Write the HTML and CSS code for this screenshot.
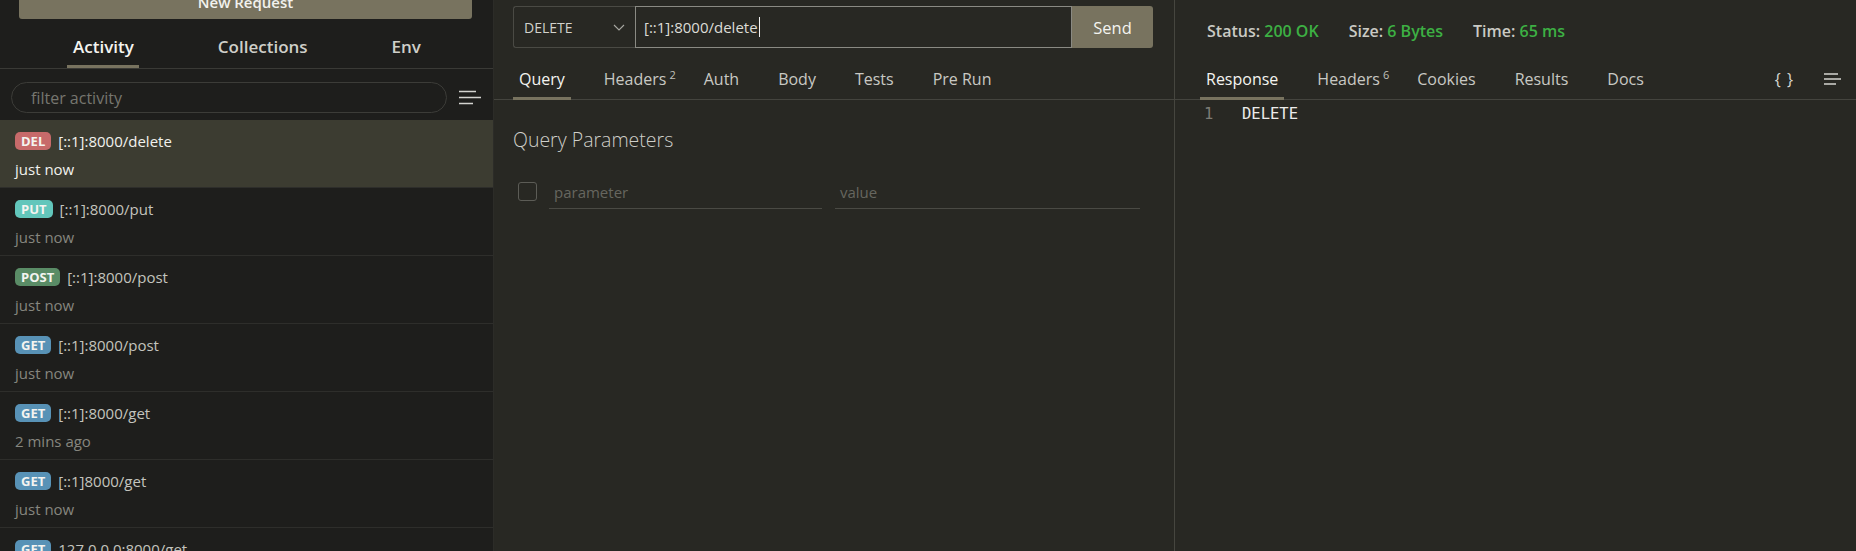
FILE: index.html
```html
<!DOCTYPE html>
<html lang="en">
<head>
<meta charset="utf-8">
<title>Thunder Client</title>
<link rel="stylesheet" href="styles.css">
</head>
<body>
<div class="app">
  <aside class="sidebar">
    <button class="new-req">New Request</button>
    <nav class="side-tabs">
      <span class="side-tab active">Activity</span>
      <span class="side-tab">Collections</span>
      <span class="side-tab">Env</span>
    </nav>
    <div class="filter-row">
      <div class="filter">filter activity</div>
      <svg class="sort-icon" width="24" height="16" viewBox="0 0 24 16">
        <path d="M0 1.5H17M0 7.5H22M0 13.5H14" stroke="#d4d4d0" stroke-width="1.6" fill="none"/>
      </svg>
    </div>
    <ul class="history">
      <li class="item active">
        <div class="line"><span class="badge del">DEL</span><span class="url">[::1]:8000/delete</span></div>
        <div class="time">just now</div>
      </li>
      <li class="item">
        <div class="line"><span class="badge put">PUT</span><span class="url">[::1]:8000/put</span></div>
        <div class="time">just now</div>
      </li>
      <li class="item">
        <div class="line"><span class="badge post">POST</span><span class="url">[::1]:8000/post</span></div>
        <div class="time">just now</div>
      </li>
      <li class="item">
        <div class="line"><span class="badge get">GET</span><span class="url">[::1]:8000/post</span></div>
        <div class="time">just now</div>
      </li>
      <li class="item">
        <div class="line"><span class="badge get">GET</span><span class="url">[::1]:8000/get</span></div>
        <div class="time">2 mins ago</div>
      </li>
      <li class="item">
        <div class="line"><span class="badge get">GET</span><span class="url">[::1]8000/get</span></div>
        <div class="time">just now</div>
      </li>
      <li class="item">
        <div class="line"><span class="badge get">GET</span><span class="url">127.0.0.0:8000/get</span></div>
        <div class="time">just now</div>
      </li>
    </ul>
  </aside>

  <main class="request">
    <div class="url-bar">
      <div class="method">
        <span>DELETE</span>
        <svg class="chev" width="12" height="7" viewBox="0 0 12 7"><path d="M1 1L6 6L11 1" stroke="#a8a8a2" stroke-width="1.1" fill="none"/></svg>
      </div>
      <div class="url-input"><span>[::1]:8000/delete</span><span class="caret"></span></div>
      <button class="send">Send</button>
    </div>
    <nav class="tabs">
      <span class="tab active">Query</span>
      <span class="tab">Headers<sup class="count">2</sup></span>
      <span class="tab">Auth</span>
      <span class="tab">Body</span>
      <span class="tab">Tests</span>
      <span class="tab">Pre Run</span>
    </nav>
    <section class="params">
      <h2 class="params-title">Query Parameters</h2>
      <div class="param-row">
        <span class="checkbox"></span>
        <div class="field key">parameter</div>
        <div class="field val">value</div>
      </div>
    </section>
  </main>

  <section class="response">
    <div class="status">
      <span class="stat">Status: <b>200 OK</b></span>
      <span class="stat">Size: <b>6 Bytes</b></span>
      <span class="stat">Time: <b>65 ms</b></span>
    </div>
    <nav class="tabs resp-tabs">
      <span class="tab active">Response</span>
      <span class="tab">Headers<sup class="count">6</sup></span>
      <span class="tab">Cookies</span>
      <span class="tab">Results</span>
      <span class="tab">Docs</span>
      <span class="tab-tools">
        <span class="braces">{ }</span>
        <svg class="menu-icon" width="20" height="12" viewBox="0 0 20 12">
          <path d="M0 1H14M0 6H17M0 11H12" stroke="#d4d4d0" stroke-width="1.4" fill="none"/>
        </svg>
      </span>
    </nav>
    <div class="code">
      <span class="ln">1</span><span class="code-text">DELETE</span>
    </div>
  </section>
</div>
</body>
</html>
```

FILE: styles.css
```css
* { box-sizing: border-box; }
html, body {
  margin: 0;
  padding: 0;
  width: 1856px;
  height: 551px;
  overflow: hidden;
  background: #282823;
  font-family: "Open Sans", "Noto Sans", sans-serif;
  color: #d8d8d2;
}
.app {
  display: flex;
  height: 551px;
}

/* ---------- sidebar ---------- */
.sidebar {
  width: 494px;
  flex: none;
  background: #1e1e1c;
  border-right: 1px solid #2c2c28;
  overflow: hidden;
  display: flex;
  flex-direction: column;
}
.new-req {
  margin: -15px 21px 0 19px;
  height: 34px;
  flex: none;
  border: none;
  border-radius: 3px;
  background: #78735f;
  color: #f2f2ee;
  font-family: inherit;
  font-size: 15px;
  font-weight: 600;
  padding: 0;
}
.side-tabs {
  display: flex;
  gap: 73px;
  padding-left: 67px;
  margin-top: 13px;
  border-bottom: 1px solid #3a3a36;
  flex: none;
}
.side-tab {
  padding: 0 5px 0 6px;
  height: 36px;
  line-height: 30px;
  font-size: 17px;
  font-weight: 600;
  color: #cfcfc9;
  border-bottom: 3px solid transparent;
}
.side-tab.active {
  color: #f4f4f0;
  border-bottom-color: #78735f;
}
.filter-row {
  display: flex;
  align-items: center;
  margin: 13px 0 7px 11px;
  flex: none;
}
.filter {
  width: 436px;
  height: 31px;
  border: 1px solid #3c3c38;
  border-radius: 16px;
  padding-left: 19px;
  line-height: 31px;
  font-size: 16px;
  color: #76766f;
}
.sort-icon {
  margin-left: 12px;
  margin-top: 1px;
}
.history {
  list-style: none;
  margin: 0;
  padding: 0;
}
.item {
  height: 68px;
  padding: 12px 14px 0 15px;
  border-bottom: 1px solid #2e2e2b;
}
.item.active {
  background: #3c3c31;
}
.line {
  display: flex;
  align-items: center;
  height: 18px;
  gap: 7px;
}
.badge {
  height: 18px;
  line-height: 18px;
  padding: 0 6px;
  border-radius: 5px;
  font-size: 13px;
  font-weight: 700;
  color: #f4f4f0;
}
.badge.del { background: #c76a6a; }
.badge.put { background: #62c6bb; }
.badge.post { background: #5a8c66; }
.badge.get { background: #5892b6; }
.url {
  font-size: 15px;
  color: #c4c4be;
}
.time {
  margin-top: 9px;
  line-height: 20px;
  font-size: 15px;
  color: #86867f;
}
.item.active .url,
.item.active .time { color: #f2f2ee; }

/* ---------- request ---------- */
.request {
  width: 681px;
  flex: none;
  border-right: 1px solid #46463f;
  padding-top: 6px;
}
.url-bar {
  display: flex;
  height: 42px;
  margin: 0 21px 0 19px;
}
.method {
  width: 122px;
  display: flex;
  align-items: center;
  justify-content: space-between;
  padding: 0 10px 0 10px;
  border: 1px solid #4a4a44;
  border-right: none;
  border-radius: 3px 0 0 3px;
  font-size: 14px;
  color: #d2d2cc;
}
.url-input {
  flex: 1;
  display: flex;
  align-items: center;
  padding-left: 8px;
  border: 1px solid #8a8a83;
  font-size: 15px;
  color: #dcdcd6;
}
.caret {
  width: 1px;
  height: 20px;
  background: #f0f0f0;
  margin-left: 1px;
}
.send {
  width: 81px;
  border: none;
  border-radius: 0 3px 3px 0;
  background: #78735f;
  color: #f4f4f0;
  font-family: inherit;
  font-size: 16.5px;
  padding: 0;
}
.tabs {
  display: flex;
  gap: 27px;
  margin-top: 11px;
  padding-left: 19px;
  border-bottom: 1px solid #44443e;
  height: 41px;
}
.tab {
  padding: 0 6px;
  height: 41px;
  line-height: 40px;
  font-size: 16px;
  color: #c9c9c3;
  border-bottom: 3px solid transparent;
  margin-bottom: -1px;
}
.tab.active {
  color: #f4f4f0;
  border-bottom-color: #78735f;
}
.count {
  font-size: 11px;
  margin-left: 3px;
  margin-right: -11px;
  vertical-align: 6px;
  line-height: 0;
  color: #c0c0ba;
}
.params {
  padding: 0 0 0 19px;
}
.params-title {
  margin: 27px 0 0;
  font-size: 19.5px;
  line-height: 26px;
  font-weight: 300;
  color: #cfcfc9;
}
.param-row {
  display: flex;
  align-items: flex-start;
  margin-top: 29px;
}
.checkbox {
  width: 19px;
  height: 19px;
  margin-left: 5px;
  border: 1px solid #5c5c56;
  border-radius: 3px;
  flex: none;
}
.field {
  height: 27px;
  border-bottom: 1px solid #4a4a44;
  font-size: 15px;
  line-height: 20px;
  color: #66665f;
  padding-left: 5px;
}
.field.key { width: 273px; margin-left: 12px; }
.field.val { width: 305px; margin-left: 13px; }

/* ---------- response ---------- */
.response {
  flex: 1;
  padding-top: 19px;
}
.status {
  display: flex;
  gap: 30px;
  padding-left: 32px;
  height: 24px;
  align-items: center;
  font-size: 16px;
  font-weight: 600;
  color: #cacac4;
}
.stat b {
  font-weight: 600;
  color: #3db043;
}
.resp-tabs {
  margin-top: 16px;
  padding-left: 25px;
  padding-right: 12px;
}
.tab-tools {
  margin-left: auto;
  display: flex;
  align-items: center;
  gap: 30px;
  height: 40px;
}
.braces {
  font-size: 16px;
  color: #d8d8d2;
  letter-spacing: 1px;
}
.code {
  display: flex;
  align-items: center;
  height: 22px;
  margin-top: 3px;
  padding-left: 29px;
  font-family: "DejaVu Sans Mono", "Liberation Mono", monospace;
  font-size: 15.5px;
}
.ln {
  width: 38px;
  color: #7c7c75;
}
.code-text {
  color: #ececea;
}
```
